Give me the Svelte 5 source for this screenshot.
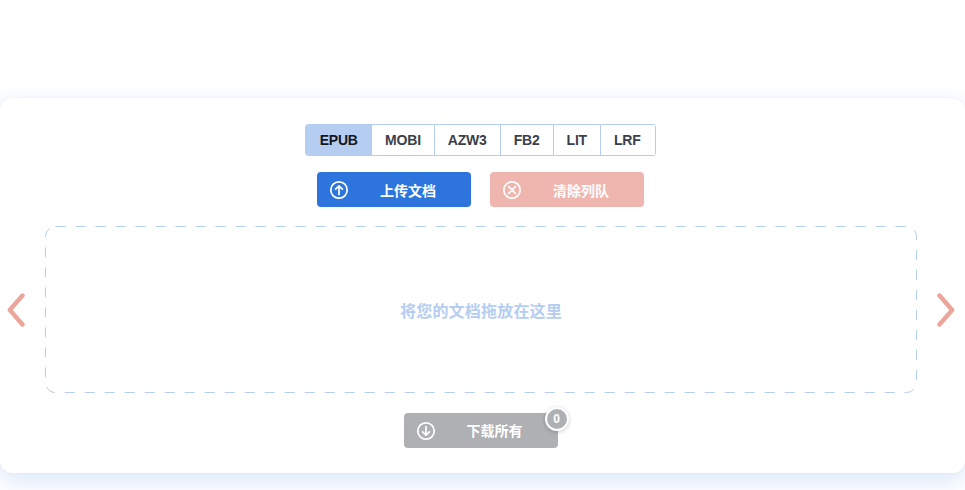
<script>
	const formats = ['EPUB', 'MOBI', 'AZW3', 'FB2', 'LIT', 'LRF'];
	let active = 'EPUB';
	let count = 0;
</script>

<div class="page">
	<div class="card">
		<div class="tabs">
			{#each formats as f}
				<button class="tab" class:active={f === active} on:click={() => (active = f)}>{f}</button>
			{/each}
		</div>

		<div class="actions">
			<button class="btn upload">
				<svg viewBox="0 0 20 20" width="20" height="20" fill="none" stroke="#fff" stroke-width="1.7" stroke-linecap="round" stroke-linejoin="round">
					<circle cx="10" cy="10" r="8.2" />
					<path d="M10 14.5V6M6.6 9.2 10 5.8l3.4 3.4" />
				</svg>
				<span>上传文档</span>
			</button>
			<button class="btn clear">
				<svg viewBox="0 0 20 20" width="20" height="20" fill="none" stroke="#fff" stroke-width="1.7" stroke-linecap="round">
					<circle cx="10" cy="10" r="8.2" />
					<path d="M6.6 6.6l6.8 6.8M13.4 6.6l-6.8 6.8" />
				</svg>
				<span>清除列队</span>
			</button>
		</div>

		<div class="stage">
			<svg class="arrow" viewBox="0 0 18 34" width="18" height="34" fill="none" stroke="#eba59b" stroke-width="4.4" stroke-linecap="round" stroke-linejoin="round">
				<path d="M15.5 2.5 2.8 17l12.700 14.500" />
			</svg>
			<div class="drop">
				<svg class="dash" width="872" height="167" fill="none">
					<rect x="0.5" y="0.5" width="871" height="166" rx="10" stroke="#b5cdf1" stroke-width="1" stroke-dasharray="10 10" />
				</svg>
				<span>将您的文档拖放在这里</span>
			</div>
			<svg class="arrow" viewBox="0 0 18 34" width="18" height="34" fill="none" stroke="#eba59b" stroke-width="4.4" stroke-linecap="round" stroke-linejoin="round">
				<path d="M2.500 2.500 15.200 17 2.500 31.500" />
			</svg>
		</div>

		<div class="bottom">
			<button class="btn download">
				<svg viewBox="0 0 20 20" width="20" height="20" fill="none" stroke="#fff" stroke-width="1.7" stroke-linecap="round" stroke-linejoin="round">
					<circle cx="10" cy="10" r="8.2" />
					<path d="M10 5.500V14M6.600 10.800 10 14.200l3.400-3.400" />
				</svg>
				<span>下载所有</span>
				<em class="badge">{count}</em>
			</button>
		</div>
	</div>
</div>

<style>
	:global(body) {
		margin: 0;
		background: #fff;
		overflow: hidden;
	}

	.page {
		width: 965px;
		height: 490px;
		padding-top: 98px;
		box-sizing: border-box;
		font-family: 'Liberation Sans', 'Noto Sans CJK SC', sans-serif;
	}

	.card {
		width: 965px;
		height: 375px;
		box-sizing: border-box;
		background: #fff;
		border-radius: 12px;
		box-shadow: 0 0 2px rgba(60, 60, 120, 0.1), 0 8px 26px rgba(45, 115, 220, 0.18);
		padding-top: 26px;
		display: flex;
		flex-direction: column;
		align-items: center;
	}

	.tabs {
		display: flex;
		height: 32px;
		box-sizing: border-box;
		border: 1px solid #b5cdf1;
		border-radius: 3px;
		overflow: hidden;
		margin-left: -4px;
	}

	.tab {
		border: 0;
		border-left: 1px solid #b5cdf1;
		background: #fff;
		color: #3a3f4b;
		font: bold 14px 'Liberation Sans', sans-serif;
		letter-spacing: -0.2px;
		padding: 0 13px;
	}

	.tab:first-child {
		border-left: 0;
		padding: 0 13.3px;
	}

	.tab:last-child {
		padding-right: 14px;
	}

	.tab.active {
		background: #b5cdf1;
		color: #15171c;
	}

	.actions {
		display: flex;
		gap: 19px;
		margin-top: 16px;
		margin-left: -4px;
	}

	.btn {
		position: relative;
		display: flex;
		align-items: center;
		width: 154px;
		height: 35px;
		border: 0;
		border-radius: 4px;
		padding: 0 0 0 12px;
		color: #fff;
		font: bold 14px 'Liberation Sans', 'Noto Sans CJK SC', sans-serif;
	}

	.btn span {
		flex: 1;
		text-align: center;
		padding-right: 12px;
		padding-left: 8px;
	}

	.upload {
		background: #2d75dc;
	}

	.clear {
		background: #efb6b0;
	}

	.download {
		background: #aeb0b4;
		margin-left: -4px;
	}

	.download span {
		padding-bottom: 2px;
	}

	.stage {
		display: flex;
		align-items: center;
		justify-content: space-between;
		width: 965px;
		box-sizing: border-box;
		padding: 0 10px 0 7px;
		margin-top: 19px;
	}

	.arrow {
		flex: none;
	}

	.drop {
		position: relative;
		width: 872px;
		height: 167px;
		display: flex;
		align-items: center;
		justify-content: center;
		color: #b5cdf1;
		font-size: 16px;
		font-weight: bold;
		letter-spacing: 0.2px;
	}

	.dash {
		position: absolute;
		inset: 0;
	}

	.bottom {
		margin-top: 20px;
	}

	.badge {
		position: absolute;
		top: -6px;
		right: -11px;
		width: 20px;
		height: 20px;
		border-radius: 50%;
		background: #aeb0b4;
		border: 2px solid #fff;
		box-shadow: 0 1px 4px rgba(0, 0, 0, 0.2);
		color: #fff;
		font-size: 12px;
		font-style: normal;
		line-height: 20px;
		text-align: center;
	}
</style>
